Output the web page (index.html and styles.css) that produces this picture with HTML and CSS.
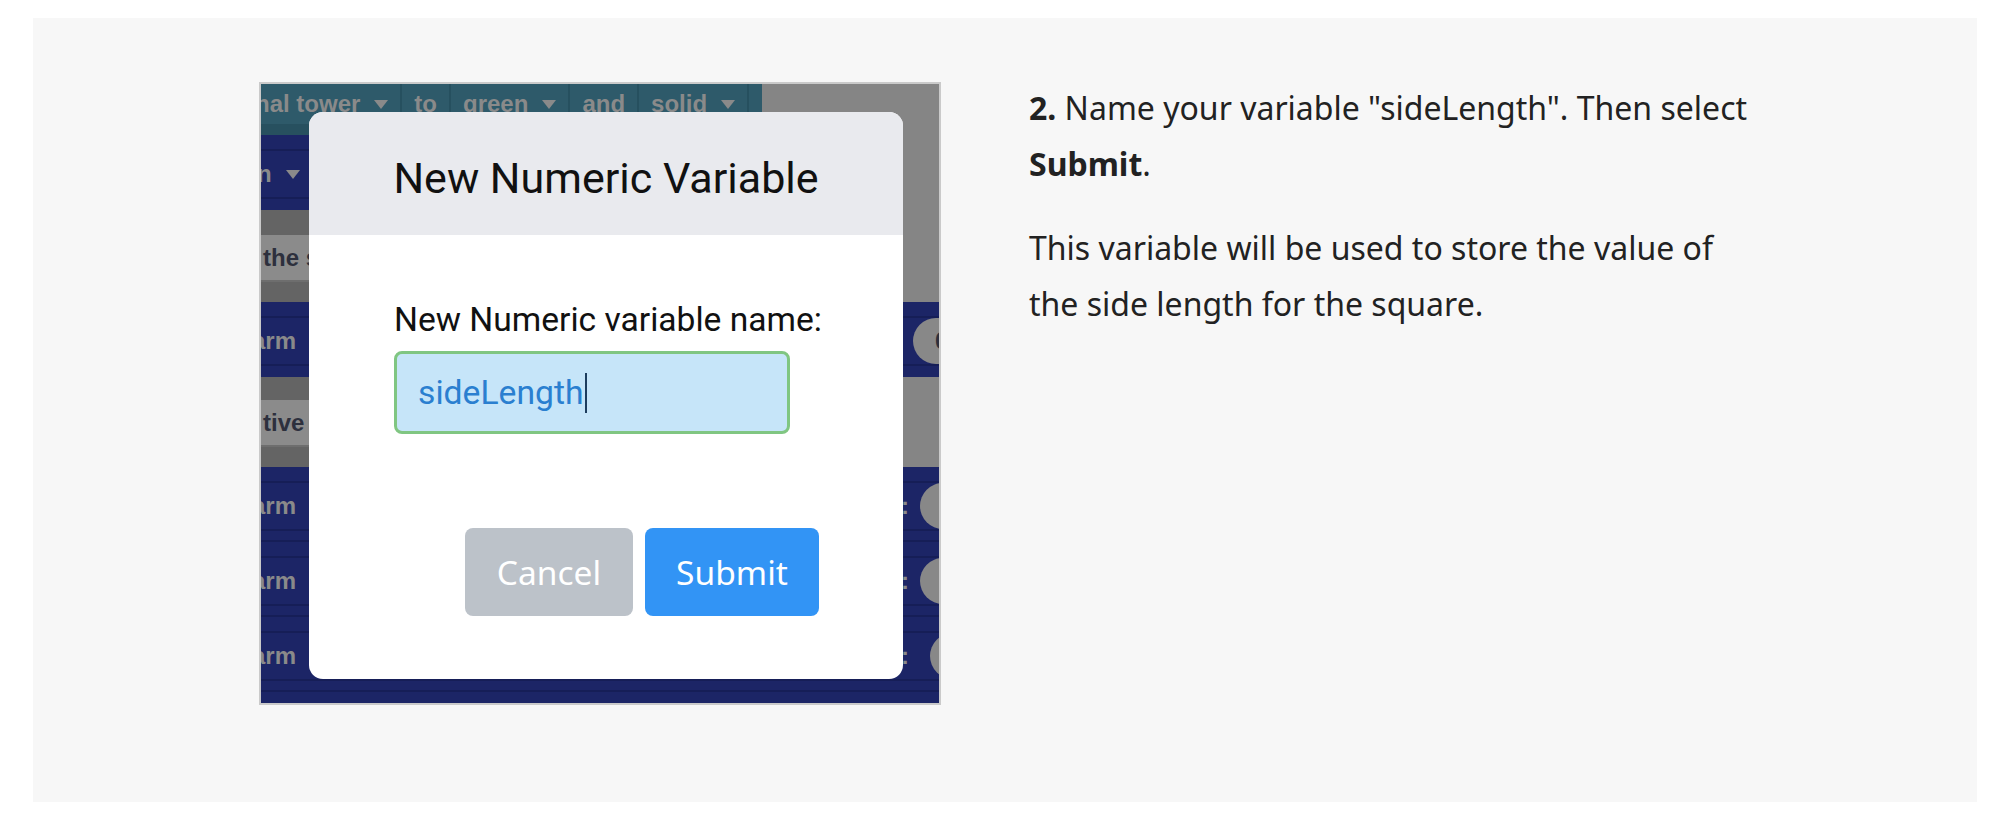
FILE: index.html
```html
<!DOCTYPE html>
<html lang="en">
<head>
<meta charset="utf-8">
<title>New Numeric Variable</title>
<link rel="stylesheet" href="styles.css">
</head>
<body>
<section class="panel">
  <figure class="shot">
    <div class="canvas">
      <div class="row row-tool">
        <div class="tool">
          <div class="tool-seg first"><span>nal tower</span><svg class="tri" viewBox="0 0 14 9"><path d="M0 0H14L7 9Z"/></svg></div>
          <div class="tool-seg"><span>to</span></div>
          <div class="tool-seg"><span>green</span><svg class="tri" viewBox="0 0 14 9"><path d="M0 0H14L7 9Z"/></svg></div>
          <div class="tool-seg"><span>and</span></div>
          <div class="tool-seg"><span>solid</span><svg class="tri" viewBox="0 0 14 9"><path d="M0 0H14L7 9Z"/></svg></div>
        </div>
      </div>
      <div class="row row-toolsub"><div class="toolsub"></div></div>
      <div class="row row-navy-top">
        <div class="navy-left">
          <div class="navy-inner"><span class="gtext clip-n">n</span><svg class="tri" viewBox="0 0 14 9"><path d="M0 0H14L7 9Z"/></svg></div>
        </div>
      </div>
      <div class="row gap-25"><div class="dark"></div></div>
      <div class="row light-row"><div class="light"><span class="dtext">the s</span></div></div>
      <div class="row gap-20"><div class="dark"></div></div>
      <div class="row navy-row">
        <div class="navy-inner full"><span class="gtext clip-a">arm</span><span class="right-grp oval-grp"><span class="oval"><span class="oval-t">0</span></span></span></div>
      </div>
      <div class="row gap-23"><div class="dark"></div></div>
      <div class="row light-row"><div class="light"><span class="dtext">tive r</span></div></div>
      <div class="row gap-20"><div class="dark"></div></div>
      <div class="navy-block">
        <div class="navy-row sub">
          <div class="navy-inner full"><span class="gtext clip-a">arm</span><span class="right-grp"><span class="gtext colon">:</span><span class="oval"></span></span></div>
        </div>
        <div class="navy-row sub">
          <div class="navy-inner full"><span class="gtext clip-a">arm</span><span class="right-grp"><span class="gtext colon">:</span><span class="oval"></span></span></div>
        </div>
        <div class="navy-row sub">
          <div class="navy-inner full"><span class="gtext clip-a">arm</span><span class="right-grp shift"><span class="gtext colon">z:</span><span class="oval"></span></span></div>
        </div>
      </div>
    </div>

    <div class="dialog">
      <div class="dialog-head">New Numeric Variable</div>
      <div class="dialog-body">
        <div class="field-label">New Numeric variable name:</div>
        <div class="field"><span class="field-text">sideLength</span><span class="caret"></span></div>
        <div class="actions">
          <span class="btn btn-cancel">Cancel</span>
          <span class="btn btn-submit">Submit</span>
        </div>
      </div>
    </div>
  </figure>

  <div class="copy">
    <p><strong>2.</strong> Name your variable "sideLength". Then select <strong>Submit</strong>.</p>
    <p>This variable will be used to store the value of the side length for the square.</p>
  </div>
</section>
</body>
</html>
```
FILE: styles.css
```css
* { box-sizing: border-box; }

body {
  margin: 0;
  background: #ffffff;
  font-family: "Noto Sans", "Open Sans", sans-serif;
}

.panel {
  margin: 18px 15px 0 33px;
  height: 784px;
  background: #f7f7f7;
  display: flex;
  align-items: flex-start;
  gap: 88px;
  padding: 64px 0 0 226px;
}

/* ---------- screenshot ---------- */
.shot {
  margin: 0;
  position: relative;
  flex: none;
  width: 682px;
  height: 623px;
  border: 2px solid #cacaca;
  overflow: hidden;
  background: #858585;
}

.canvas {
  display: flex;
  flex-direction: column;
  width: 678px;
  height: 619px;
  font-family: "Liberation Sans", Arial, sans-serif;
  font-weight: bold;
  font-size: 24px;
}

.row {
  display: flex;
  flex: none;
  background: #858585;
}

.row-tool { height: 40px; }
.tool {
  width: 501px;
  background: #2e5a6a;
  display: flex;
  align-items: center;
  color: #8a8a8a;
}
.tool-seg {
  display: flex;
  align-items: center;
  height: 100%;
  padding: 0 12px;
  border-right: 2px solid #26505f;
}
.tool-seg.first { padding-left: 0; margin-left: -6px; }
.tri {
  width: 14px;
  height: 9px;
  margin-left: 14px;
  fill: #8a8a8a;
}

.row-toolsub { height: 11px; }
.toolsub { width: 501px; background: #27505f; }

.row-navy-top { height: 75px; }
.navy-left {
  width: 480px;
  background: #1c2566;
  display: flex;
  flex-direction: column;
}

.navy-inner {
  margin-top: 14px;
  height: 50px;
  border-top: 2px solid #161e57;
  border-bottom: 2px solid #161e57;
  display: flex;
  align-items: center;
  color: #8a8a8a;
}
.navy-inner.full { width: 100%; }

.gtext { color: #8a8a8a; }
.clip-n { margin-left: -4px; }
.clip-a { margin-left: -9px; }

.gap-25 { height: 25px; }
.gap-20 { height: 20px; }
.gap-23 { height: 23px; }
.dark { width: 480px; background: #646464; }

.light-row { height: 47px; }
.light {
  width: 480px;
  background: #8b8b8b;
  border-bottom: 2px solid #6e6e6e;
  display: flex;
  align-items: center;
  padding-left: 2px;
}
.dtext { color: #2d303d; }

.navy-row {
  height: 75px;
  width: 678px;
  flex: none;
  background: #1c2566;
  display: flex;
  flex-direction: column;
}

.navy-block {
  flex: 1;
  background: #1c2566;
  display: flex;
  flex-direction: column;
}
.navy-row.sub { border-bottom: 2px solid #161e57; }

.right-grp {
  margin-left: auto;
  margin-right: -43px;
  display: flex;
  align-items: center;
  gap: 11px;
}
.right-grp.shift { margin-right: -53px; gap: 21px; }
.oval-grp { margin-right: -36px; }
.oval {
  width: 62px;
  height: 46px;
  border-radius: 23px;
  background: #888888;
  display: flex;
  align-items: center;
  padding-left: 22px;
}
.oval-t { color: #2d303d; }

/* ---------- dialog ---------- */
.dialog {
  position: absolute;
  left: 48px;
  top: 28px;
  width: 594px;
  height: 567px;
  border-radius: 14px;
  background: #ffffff;
  overflow: hidden;
  font-family: Roboto, "Liberation Sans", sans-serif;
  display: flex;
  flex-direction: column;
}

.dialog-head {
  height: 123px;
  flex: none;
  background: #e9eaee;
  display: flex;
  align-items: center;
  justify-content: center;
  padding-top: 9px;
  font-size: 43px;
  color: #111111;
}

.dialog-body {
  display: flex;
  flex-direction: column;
  align-items: flex-start;
  padding: 65px 84px 0 85px;
}

.field-label {
  font-size: 33.6px;
  color: #111111;
  line-height: 40px;
  white-space: nowrap;
}

.field {
  margin-top: 11px;
  width: 396px;
  height: 83px;
  border: 3px solid #80c682;
  border-radius: 8px;
  background: #c6e5f9;
  display: flex;
  align-items: center;
  padding-left: 21px;
}
.field-text {
  font-size: 33.7px;
  color: #2a7fd0;
}
.caret {
  width: 2px;
  height: 40px;
  background: #1d3d5e;
  margin-left: 1px;
}

.actions {
  align-self: stretch;
  margin-top: 94px;
  display: flex;
  justify-content: flex-end;
  gap: 12px;
}
.btn {
  height: 88px;
  border-radius: 8px;
  display: flex;
  align-items: center;
  justify-content: center;
  font-family: "Noto Sans", "Open Sans", sans-serif;
  font-size: 33.5px;
  color: #ffffff;
}
.btn-cancel { width: 168px; background: #bcc2c9; }
.btn-submit { width: 174px; background: #3294f5; }

/* ---------- copy ---------- */
.copy {
  width: 732px;
  margin-top: -2px;
  font-size: 32px;
  line-height: 56px;
  color: #222222;
}
.copy p { margin: 0 0 28px; }
.copy strong { font-weight: bold; }
```
